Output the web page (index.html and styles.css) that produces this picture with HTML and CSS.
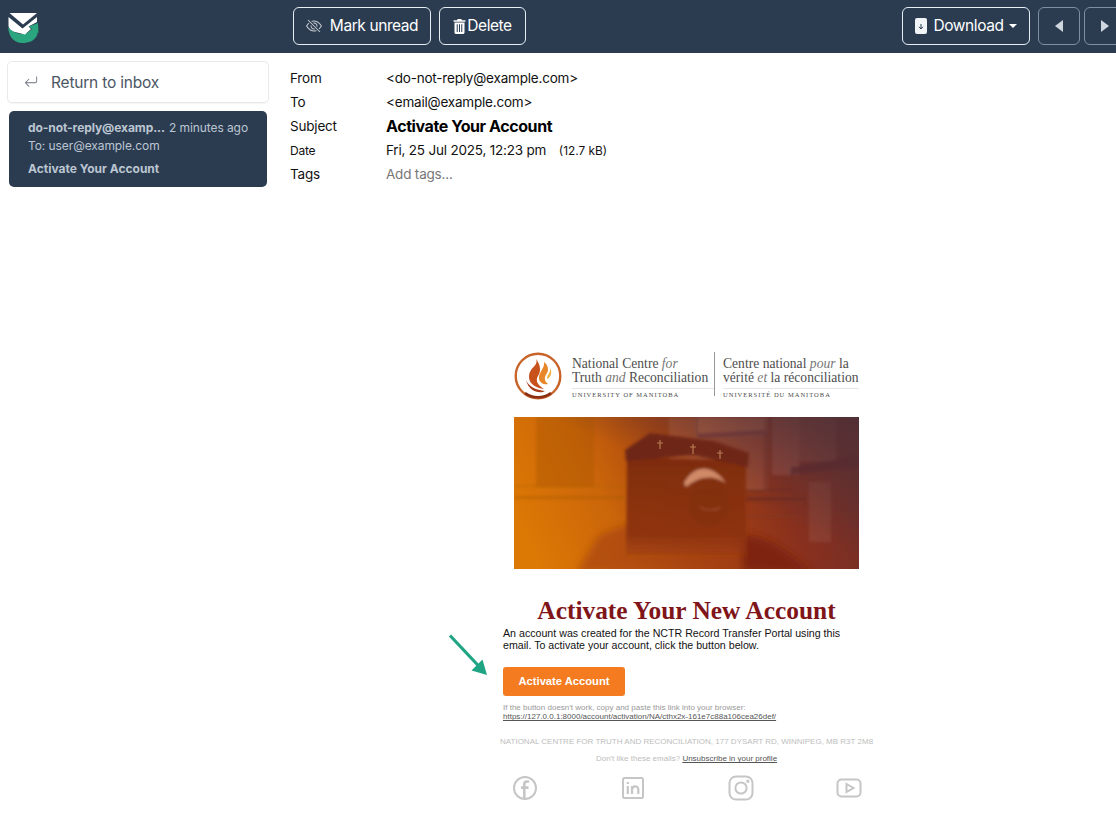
FILE: index.html
```html
<!DOCTYPE html>
<html lang="en">
<head>
<meta charset="utf-8">
<title>Activate Your Account</title>
<link rel="stylesheet" href="styles.css">
</head>
<body>
<header class="topbar">
  <svg class="brand" viewBox="0 0 32 32" aria-hidden="true">
    <path d="M1 15 C2 26 8 31 15 31 C22 31 28 29 30.5 22 L31 12 L24 19 C18 24 8 23 1 15Z" fill="#2aa57e"/>
    <path d="M31 11 L31.5 21 L28 18.5 L22 26 L16 25 L25 17 L22 14.5Z" fill="#2aa57e"/>
    <path d="M2.5 1 H30 L16 12.5Z" fill="#fff"/>
    <path d="M1.5 5 L15.5 16.5 L30 5 V10 L21.5 14.5 L24 17 L18 22.5 L8 20 C4 18.5 1.5 16 1.5 13.5Z" fill="#fff"/>
  </svg>
  <div class="actions">
    <button class="btn btn-unread">
      <svg class="ico-eye" viewBox="0 0 16 16" fill="#fff" aria-hidden="true"><path d="M13.359 11.238C15.06 9.72 16 8 16 8s-3-5.5-8-5.5a7.028 7.028 0 0 0-2.79.588l.77.771A5.944 5.944 0 0 1 8 3.5c2.12 0 3.879 1.168 5.168 2.457A13.134 13.134 0 0 1 14.828 8c-.058.087-.122.183-.195.288-.335.48-.83 1.12-1.465 1.755-.165.165-.337.328-.517.486l.708.709z"/><path d="M11.297 9.176a3.5 3.5 0 0 0-4.474-4.474l.823.823a2.5 2.5 0 0 1 2.829 2.829l.822.822zm-2.943 1.299.822.822a3.5 3.5 0 0 1-4.474-4.474l.823.823a2.5 2.5 0 0 0 2.829 2.829z"/><path d="M3.35 5.47c-.18.16-.353.322-.518.487A13.134 13.134 0 0 0 1.172 8l.195.288c.335.48.83 1.12 1.465 1.755C4.121 11.332 5.881 12.5 8 12.5c.716 0 1.39-.133 2.02-.36l.77.772A7.029 7.029 0 0 1 8 13.5C3 13.5 0 8 0 8s.939-1.721 2.641-3.238l.708.709zm10.296 8.884-12-12 .708-.708 12 12-.708.708z"/></svg>
      <span>Mark unread</span>
    </button>
    <button class="btn btn-delete">
      <svg class="ico-trash" viewBox="0 0 14 16" fill="#fff" aria-hidden="true"><path d="M5 0H9L9.6 1.2H13.4V3H.6V1.2H4.4Z"/><path d="M1.6 3.8H12.4V14.5C12.4 15.4 11.8 16 11 16H3C2.2 16 1.6 15.4 1.6 14.5ZM4 5.6V14H5.1V5.6ZM6.45 5.6V14H7.55V5.6ZM8.9 5.6V14H10V5.6Z" fill-rule="evenodd"/></svg>
      <span>Delete</span>
    </button>
  </div>
  <div class="nav">
    <button class="btn btn-download">
      <svg class="ico-file" viewBox="0 0 12 16" aria-hidden="true"><rect width="12" height="16" rx="2" fill="#f2f5f8"/><path d="M6 6V10.5M4 8.8 6 11 8 8.8" fill="none" stroke="#2b3c51" stroke-width="1"/></svg>
      <span>Download</span>
      <i class="caret-down"></i>
    </button>
    <button class="btn btn-arrow muted"><i class="caret-left"></i></button>
    <button class="btn btn-arrow muted"><i class="caret-right"></i></button>
  </div>
</header>

<div class="layout">
  <aside class="sidebar">
    <a class="back">
      <svg class="ico-back" viewBox="0 0 16 16" fill="#6b7280" aria-hidden="true"><path d="M14.5 1.5a.5.5 0 0 1 .5.5v4.8a2.5 2.5 0 0 1-2.5 2.5H2.707l3.347 3.346a.5.5 0 0 1-.708.708l-4.2-4.2a.5.5 0 0 1 0-.708l4-4a.5.5 0 1 1 .708.708L2.707 8.3H12.5A1.5 1.5 0 0 0 14 6.8V2a.5.5 0 0 1 .5-.5z"/></svg>
      <span>Return to inbox</span>
    </a>
    <div class="msg">
      <div class="msg-top"><b>do-not-reply@examp...</b><span>2 minutes ago</span></div>
      <div class="msg-to">To: user@example.com</div>
      <div class="msg-subject">Activate Your Account</div>
    </div>
  </aside>

  <main class="main">
    <dl class="meta">
      <dt>From</dt><dd>&lt;do-not-reply@example.com&gt;</dd>
      <dt>To</dt><dd>&lt;email@example.com&gt;</dd>
      <dt>Subject</dt><dd class="subject">Activate Your Account</dd>
      <dt class="small">Date</dt><dd>Fri, 25 Jul 2025, 12:23 pm <small class="size">(12.7 kB)</small></dd>
      <dt>Tags</dt><dd class="tags">Add tags...</dd>
    </dl>

    <section class="email">
      <div class="org">
        <svg class="org-mark" viewBox="0 0 48 48" aria-hidden="true">
          <circle cx="24" cy="24" r="22.3" fill="none" stroke="#c8642a" stroke-width="2.4"/>
          <path d="M11 41 A22 22 0 0 0 37 41" fill="none" stroke="#8a2f14" stroke-width="2.6"/>
          <path d="M22 7 C25 14 15 15 15 25 C15 32 22 36 30 37 C24 33 21 29 24 24 C27 20 27 13 22 7Z" fill="#c8521c"/>
          <path d="M30 10 C31 17 24 20 25 27 C26 31 30 33 34 32 C30 29 30 25 33 21 C35 18 34 13 30 10Z" fill="#e8862a"/>
          <path d="M36 16 C37 21 33 22 33 27 C36 26 39 21 36 16Z" fill="#f0b040"/>
          <path d="M12 28 C15 35 22 38 31 39 C26 42 15 40 12 28Z" fill="#a83c18"/>
        </svg>
        <div class="org-col org-en">
          <p class="org-name">National Centre <em>for</em><br>Truth <em>and</em> Reconciliation</p>
          <p class="org-uni">UNIVERSITY OF MANITOBA</p>
        </div>
        <div class="org-col org-fr">
          <p class="org-name">Centre national <em>pour</em> la<br>vérité <em>et</em> la réconciliation</p>
          <p class="org-uni">UNIVERSITÉ DU MANITOBA</p>
        </div>
      </div>

      <svg class="hero" viewBox="0 0 345 152" aria-hidden="true">
        <defs>
          <linearGradient id="heroBase" x1="0" y1="0.6" x2="1" y2="0.4">
            <stop offset="0" stop-color="#dc7804"/>
            <stop offset=".26" stop-color="#cb660a"/>
            <stop offset=".5" stop-color="#a84410"/>
            <stop offset=".76" stop-color="#88301e"/>
            <stop offset="1" stop-color="#6e2e2a"/>
          </linearGradient>
          <linearGradient id="boxFade" x1="0" y1="0" x2="0" y2="1">
            <stop offset="0" stop-color="#7e2c10"/>
            <stop offset=".8" stop-color="#8c3210" stop-opacity=".9"/>
            <stop offset="1" stop-color="#953810" stop-opacity=".35"/>
          </linearGradient>
          <linearGradient id="cornerFade" x1="0" y1="1" x2="1" y2="0">
            <stop offset=".55" stop-color="#4e3036" stop-opacity="0"/>
            <stop offset="1" stop-color="#4e3036" stop-opacity=".9"/>
          </linearGradient>
          <filter id="soft"><feGaussianBlur stdDeviation="1.4"/></filter>
          <filter id="softer"><feGaussianBlur stdDeviation="4"/></filter>
        </defs>
        <rect width="345" height="152" fill="url(#heroBase)"/>
        <g filter="url(#soft)">
          <rect x="22" y="0" width="58" height="70" fill="#a85606" opacity=".4"/>
          <rect x="0" y="68" width="112" height="2" fill="#b06006" opacity=".4"/>
          <rect x="0" y="79" width="112" height="3" fill="#a85a08" opacity=".45"/>
          <rect x="155" y="0" width="95" height="72" fill="#e0a088" opacity=".2"/>
          <path d="M183 0H253V14L183 18Z" fill="#d8906e" opacity=".25"/>
          <path d="M183 16 L253 12 L253 18 L183 22Z" fill="#7c3a3a" opacity=".75"/>
          <rect x="182" y="0" width="2" height="18" fill="#7c3a3a" opacity=".8"/>
          <rect x="252" y="0" width="2" height="75" fill="#8c4636" opacity=".7"/>
          <rect x="258" y="0" width="27" height="58" fill="#d09a90" opacity=".22"/>
          <rect x="285" y="0" width="37" height="44" fill="#a87870" opacity=".22"/>
          <path d="M276 50 L322 42 L345 36 L345 50 L276 58Z" fill="#5e2328" opacity=".7"/>
          <rect x="232" y="72" width="46" height="2" fill="#6f2a20" opacity=".7"/>
          <rect x="232" y="80" width="60" height="4" fill="#6f2a20" opacity=".7"/>
          <rect x="232" y="98" width="50" height="2" fill="#7f3a28" opacity=".6"/>
          <rect x="295" y="65" width="22" height="60" fill="#b07a70" opacity=".18"/>
        </g>
        <rect width="345" height="152" fill="url(#cornerFade)"/>
        <g filter="url(#softer)">
          <path d="M62 156 L85 118 L112 108 L232 115 L232 156Z" fill="#a03c10" opacity=".6"/>
          <path d="M228 118 C256 118 272 135 300 156 L228 156Z" fill="#7a2210" opacity=".85"/>
        </g>
        <g filter="url(#soft)">
          <path d="M113 40 L232 44 L232 138 L112 138Z" fill="url(#boxFade)"/>
          <path d="M111 33 L136 16 L200 24 L235 36 L234 50 L180 38 L112 44Z" fill="#6e2618"/>
          <path d="M170 66 C178 50 196 44 212 66 C200 58 186 58 172 70Z" fill="#d08a68"/>
          <ellipse cx="195" cy="88" rx="20" ry="22" fill="#7a2a12" opacity=".35"/>
          <path d="M186 90 C192 94 202 94 206 90" stroke="#a0502f" stroke-width="1.2" fill="none"/>
        </g>
        <g stroke="#d6a070" stroke-width="1.2" opacity=".7">
          <path d="M146 23V32M143 26H149"/><path d="M179 27V37M176 30H182"/><path d="M206 33V42M203 36H209"/>
        </g>
      </svg>

      <h1 class="title">Activate Your New Account</h1>
      <p class="intro">An account was created for the NCTR Record Transfer Portal using this email. To activate your account, click the button below.</p>
      <a class="cta">Activate Account</a>
      <p class="fallback">If the button doesn't work, copy and paste this link into your browser:<br><a class="dark-link">https://127.0.0.1:8000/account/activation/NA/cthx2x-161e7c88a106cea26def/</a></p>
      <p class="address">NATIONAL CENTRE FOR TRUTH AND RECONCILIATION, 177 DYSART RD, WINNIPEG, MB R3T 2M8</p>
      <p class="unsub">Don't like these emails? <a class="dark-link">Unsubscribe in your profile</a></p>
      <div class="social">
        <svg viewBox="0 0 26 26" class="soc" aria-hidden="true"><circle cx="13" cy="13" r="11" /><path d="M17 6.5H15C13.2 6.5 12.3 7.6 12.3 9.3V23.5M9 12.6H16.5" stroke-width="2.6"/></svg>
        <svg viewBox="0 0 26 26" class="soc" aria-hidden="true"><rect x="3" y="3" width="20" height="20" rx="1.5"/><path d="M7.8 11V19M7.8 7V9M12 19V11M12 14.5C12.5 10.5 18.3 10 18.3 14.5V19" stroke-width="2.2"/></svg>
        <svg viewBox="0 0 26 26" class="soc" aria-hidden="true"><rect x="1.5" y="1.5" width="23" height="23" rx="6.5"/><circle cx="13" cy="13" r="5.6"/><circle cx="19.8" cy="6.2" r=".7"/></svg>
        <svg viewBox="0 0 26 26" class="soc" aria-hidden="true"><rect x="1.5" y="4.5" width="23" height="17" rx="4"/><path d="M10.5 9L17.5 13L10.5 17Z"/></svg>
      </div>
      <svg class="pointer" viewBox="0 0 40 42" aria-hidden="true"><path d="M2 1.5 L33 34.5" stroke="#1fa484" stroke-width="3.2" fill="none"/><path d="M39 41 L23.5 36.5 L34.5 25.5Z" fill="#1fa484"/></svg>
    </section>
  </main>
</div>
</body>
</html>
```
FILE: styles.css
```css
* { box-sizing: border-box; }
html, body { margin: 0; height: 100%; }
body {
  width: 1116px;
  height: 835px;
  overflow: hidden;
  background: #fff;
  font-family: Inter, "Liberation Sans", sans-serif;
  color: #111;
}
p, h1, dl, dd { margin: 0; }

.topbar {
  height: 53px;
  background: #2b3c51;
  display: flex;
  align-items: center;
  padding: 0 0 1px 7px;
  overflow: hidden;
}
.brand { width: 32px; height: 32px; margin-top: 3px; flex: none; }
.actions { display: flex; gap: 8px; margin-left: 254px; }
.nav { display: flex; gap: 8px; margin-left: auto; margin-right: -10px; }
.nav .btn-arrow + .btn-arrow { margin-left: -4px; }

.btn {
  height: 38px;
  display: inline-flex;
  align-items: center;
  justify-content: center;
  background: transparent;
  border: 1px solid #e6edf3;
  border-radius: 6px;
  color: #fff;
  font: 400 15.5px/1 Inter, "Liberation Sans", sans-serif;
  letter-spacing: -.42px;
  padding: 0;
}
.btn-unread { width: 138px; gap: 8px; }
.btn-delete { width: 87px; gap: 1px; }
.btn-download { width: 128px; gap: 6px; }
.btn-arrow { width: 42px; }
.muted { border-color: #7f8fa3; }
.ico-eye { width: 16px; height: 16px; opacity: .75; }
.ico-trash { width: 13px; height: 15px; }
.ico-file { width: 12px; height: 16px; }
.caret-down { width: 0; height: 0; border: 4px solid transparent; border-top: 4px solid #fff; border-bottom: 0; margin-left: -1px; }
.caret-left { width: 0; height: 0; border: 6px solid transparent; border-right: 8px solid #cfd6de; border-left: 0; }
.caret-right { width: 0; height: 0; border: 6px solid transparent; border-left: 8px solid #cfd6de; border-right: 0; }

.layout { display: flex; }
.sidebar { width: 290px; flex: none; padding: 8px 21px 0 7px; }
.back {
  height: 42px;
  display: flex;
  align-items: center;
  gap: 13px;
  padding-left: 16px;
  border: 1px solid #e7e9ec;
  border-radius: 5px;
  box-shadow: 0 1px 1px rgba(0,0,0,.04);
  font-size: 15.5px;
  color: #4b5563;
  letter-spacing: -.2px;
}
.ico-back { width: 14px; height: 14px; }
.msg {
  margin: 8px 2px 0;
  height: 76px;
  background: #2b3c51;
  border-radius: 5px;
  padding: 8px 0 0 19px;
  color: #bcc6d1;
  font-size: 12px;
  line-height: 18px;
  letter-spacing: -.08px;
}
.msg-top { display: flex; gap: 4px; white-space: nowrap; }
.msg-top b { font-weight: 700; }
.msg-subject { margin-top: 5px; font-weight: 700; letter-spacing: 0; }

.main { flex: 1; min-width: 0; }
.meta {
  display: grid;
  grid-template-columns: 96px 1fr;
  grid-auto-rows: 24.2px;
  padding-top: 12.5px;
  font-size: 13.5px;
  letter-spacing: -.2px;
  align-items: center;
}
.meta dt { color: #111; }
.meta dt.small { font-size: 12px; }
.meta dd { color: #111; }
.meta .subject { font-size: 16px; font-weight: 700; color: #000; letter-spacing: -.42px; }
.meta .size { font-size: 11.9px; margin-left: 9px; letter-spacing: 0; }
.meta .tags { color: #777; }

.email {
  position: relative;
  width: 377px;
  margin: 163.5px 0 0 208px;
  font-family: "Liberation Sans", Arial, sans-serif;
}
.org {
  display: flex;
  height: 52px;
  margin-left: 16px;
  font-family: "Liberation Serif", serif;
  color: #4d4d4d;
}
.org-mark { width: 48px; height: 48px; flex: none; margin-top: 2px; }
.org-col { white-space: nowrap; padding-top: 5px; margin-top: 2px; }
.org-en { margin-left: 10px; width: 143px; border-right: 1px solid #999; height: 44px; }
.org-fr { margin-left: 8px; }
.org-name { font-size: 13.6px; line-height: 14px; }
.org-name em { color: #777; }
.org-uni { font-size: 6.5px; letter-spacing: 1px; margin-top: 3px; border-top: 1px solid #e6e6e6; padding-top: 2px; line-height: 7px; }
.hero { display: block; width: 345px; height: 152px; margin: 15px 0 0 16px; }
.title {
  margin-top: 28px;
  text-align: center;
  font: 700 25.4px/27px "Liberation Serif", Georgia, serif;
  color: #7f1519;
}
.intro {
  margin: 3px 0 0 5px;
  width: 345px;
  font-size: 10.65px;
  line-height: 12px;
  color: #111;
}
.cta {
  display: flex;
  align-items: center;
  justify-content: center;
  margin: 16px 0 0 5px;
  width: 122px;
  height: 29px;
  background: #f47b20;
  border-radius: 3px;
  color: #fff;
  font-size: 11.2px;
  font-weight: 700;
}
.fallback {
  margin: 7.5px 0 0 5px;
  font-size: 8px;
  line-height: 9px;
  color: #999;
  white-space: nowrap;
}
.dark-link { color: #555; text-decoration: underline; }
.address {
  margin: 16px 0 0 2px;
  width: 375px;
  overflow: hidden;
  white-space: nowrap;
  font-size: 8px;
  line-height: 9px;
  color: #bdbdbd;
}
.unsub {
  margin-top: 8px;
  text-align: center;
  font-size: 8px;
  line-height: 9px;
  color: #bdbdbd;
}
.social {
  display: flex;
  justify-content: space-between;
  margin: 11.5px 13px 0 14px;
}
.soc {
  width: 26px;
  height: 26px;
  fill: none;
  stroke: #c6c6c6;
  stroke-width: 2;
}
.pointer {
  position: absolute;
  left: -50px;
  top: 284px;
  width: 40px;
  height: 42px;
}
```
